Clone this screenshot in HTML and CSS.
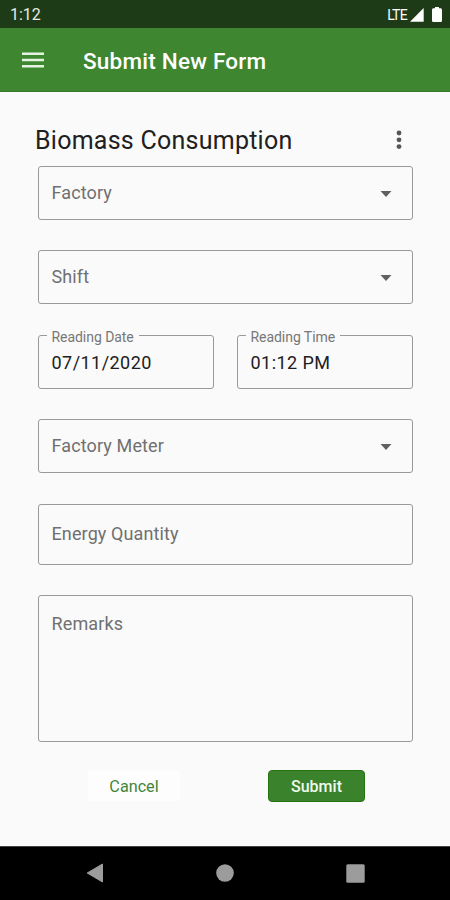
FILE: index.html
```html
<!DOCTYPE html>
<html lang="en">
<head>
<meta charset="utf-8">
<title>Submit New Form</title>
<link rel="stylesheet" href="styles.css">
</head>
<body>
<div class="status">
  <span class="clock">1:12</span>
  <span class="lte">LTE</span>
  <svg class="signal" width="14" height="14" viewBox="0 0 14 14"><path d="M13.700 0v13.700H0z" fill="#fff"/></svg>
  <svg class="battery" width="10" height="15" viewBox="0 0 10 15"><path d="M3 0h4v1.300h1.800Q10 1.500 10 3v10.500Q10 15 8.800 15H1.200Q0 15 0 13.500V3Q0 1.500 1.200 1.300H3z" fill="#fff"/></svg>
</div>
<header class="appbar">
  <svg class="menu" width="22" height="16" viewBox="0 0 22 16"><path d="M0 1.800h22M0 8h22M0 14.200h22" stroke="#e4f3e0" stroke-width="2.500"/></svg>
  <h1>Submit New Form</h1>
</header>
<main class="form">
  <div class="heading">
    <h2>Biomass Consumption</h2>
    <svg class="more" width="6" height="20" viewBox="0 0 6 20"><g fill="#555"><circle cx="3" cy="3" r="2.400"/><circle cx="3" cy="9.800" r="2.400"/><circle cx="3" cy="16.600" r="2.400"/></g></svg>
  </div>
  <div class="field"><span>Factory</span><svg class="arrow" width="12" height="6" viewBox="0 0 12 6"><path d="M.5 0h11L6 6z" fill="#606060"/></svg></div>
  <div class="field"><span>Shift</span><svg class="arrow" width="12" height="6" viewBox="0 0 12 6"><path d="M.5 0h11L6 6z" fill="#606060"/></svg></div>
  <div class="pair">
    <fieldset class="outlined"><legend><span>Reading Date</span></legend><div class="value date">07/11/2020</div></fieldset>
    <fieldset class="outlined"><legend><span>Reading Time</span></legend><div class="value time">01:12 PM</div></fieldset>
  </div>
  <div class="field"><span>Factory Meter</span><svg class="arrow" width="12" height="6" viewBox="0 0 12 6"><path d="M.5 0h11L6 6z" fill="#606060"/></svg></div>
  <div class="field quantity"><span>Energy Quantity</span></div>
  <div class="field remarks"><span>Remarks</span></div>
  <div class="actions">
    <button class="cancel">Cancel</button>
    <button class="submit">Submit</button>
  </div>
</main>
<nav class="navbar">
  <svg width="18" height="20" viewBox="0 0 18 20"><path d="M16.500 1v18L1.200 10z" fill="#9c9c9c" stroke="#9c9c9c" stroke-linejoin="round"/></svg>
  <svg width="18" height="18" viewBox="0 0 18 18"><circle cx="9" cy="9" r="8.800" fill="#9c9c9c"/></svg>
  <svg width="19" height="19" viewBox="0 0 19 19"><rect x=".3" y=".3" width="18.400" height="18.400" rx="1.500" fill="#9c9c9c"/></svg>
</nav>
</body>
</html>
```
FILE: styles.css
```css
* { box-sizing: border-box; }
body {
  margin: 0;
  width: 450px;
  height: 900px;
  overflow: hidden;
  display: flex;
  flex-direction: column;
  background: #fafafa;
  font-family: Roboto, sans-serif;
  color: #202020;
}
svg { display: block; flex: none; }
h1, h2 { margin: 0; white-space: nowrap; }
.status {
  height: 28px;
  background: #1e3b17;
  color: #fff;
  display: flex;
  align-items: center;
  padding: 1px 8px 0 10px;
}
.clock { font-size: 16px; letter-spacing: 0; margin-right: auto; color: #e6ebe4; }
.lte { font-size: 14px; letter-spacing: -.7px; margin-right: 3px; }
.battery { margin-left: 8px; }
.appbar {
  height: 64px;
  background: #3f8631;
  border-bottom: 1px solid #37782b;
  display: flex;
  align-items: center;
  padding: 3px 0 0 22px;
}
.menu { margin-top: -3px; }
h1 { margin-left: 39px; font-size: 22.500px; line-height: 28px; font-weight: 500; color: #fff; letter-spacing: .22px; }
.form { flex: 1; padding: 34px 37px 0 38px; }
.heading {
  height: 40px;
  display: flex;
  justify-content: space-between;
  padding-right: 11px;
}
h2 { margin-left: -3px; font-size: 25px; line-height: 30px; font-weight: 400; letter-spacing: .25px; }
.more { margin-top: 4px; }
.field {
  width: 375px;
  height: 54px;
  border: 1px solid #999;
  border-radius: 3px;
  display: flex;
  align-items: center;
  justify-content: space-between;
  padding: 0 20px 0 12.500px;
  margin-bottom: 30.400px;
  font-size: 18px;
  letter-spacing: .12px;
  color: #707070;
}
.field span { margin-top: -1px; }
.arrow { margin-top: 1px; }
.pair { display: flex; gap: 23px; height: 54px; margin-bottom: 30.400px; }
.outlined {
  width: 176px;
  height: 61px;
  margin: -7px 0 0;
  padding: 0 0 0 8px;
  border: 1px solid #999;
  border-radius: 3px;
  min-width: 0;
}
legend { padding: 0 5px 0 4.500px; height: 15px; font-size: 14px; line-height: 15px; color: #777; letter-spacing: -.05px; white-space: nowrap; }
legend span { position: relative; top: 2px; }
.value { margin: 8px 0 0 4.500px; font-size: 18px; line-height: 24px; letter-spacing: .45px; }
.quantity { height: 61px; margin-bottom: 30px; }
.remarks { height: 147px; align-items: flex-start; padding-top: 18px; margin-bottom: 28px; }
.actions { display: flex; gap: 88px; padding-left: 50px; }
button { border: 0; padding: 0; font: 500 16px/32px Roboto, sans-serif; }
.cancel { width: 92px; height: 31px; padding-top: 1px; background: #fdfdfd; color: #418638; font-weight: 400; font-size: 16.200px; }
.submit { width: 97px; height: 32px; border: 1px solid #26740f; border-radius: 4px; background: #3b822c; color: #f0faec; }
.navbar {
  height: 54px;
  background: #000;
  border-top: 1px solid #444;
  display: flex;
  align-items: center;
  justify-content: space-between;
  padding: 0 85px 1px 86px;
}
```
